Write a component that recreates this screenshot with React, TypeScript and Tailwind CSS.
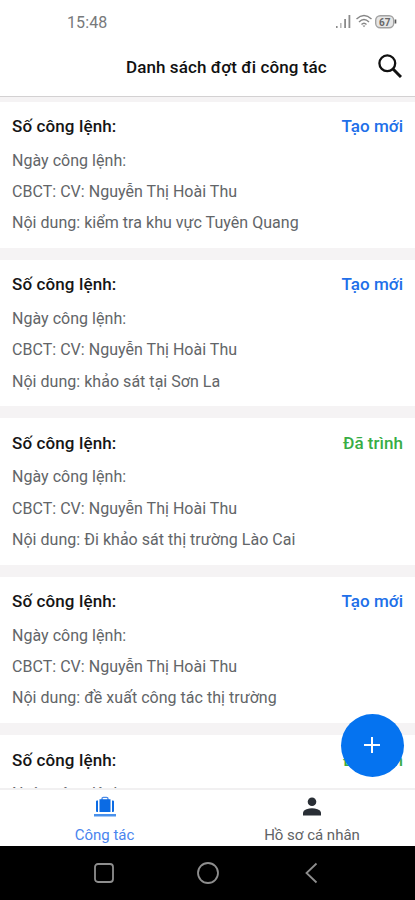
import { clsx } from "clsx"

type Trip = {
	content: string
	status: "new" | "submitted"
}

const trips: Trip[] = [
	{ content: "kiểm tra khu vực Tuyên Quang", status: "new" },
	{ content: "khảo sát tại Sơn La", status: "new" },
	{ content: "Đi khảo sát thị trường Lào Cai", status: "submitted" },
	{ content: "đề xuất công tác thị trường", status: "new" },
	{ content: "khảo sát thị trường", status: "submitted" },
]

const App = () => {
	return (
		<div className="relative flex h-[900px] w-[415px] flex-col overflow-hidden bg-white font-[Roboto,'Noto_Sans',sans-serif] text-[16px]">
			<StatusBar />
			<header className="flex h-[53px] shrink-0 items-center border-b border-[#d3d1d2] pr-3 pl-[126px]">
				<h1 className="mb-1.5 flex-1 whitespace-nowrap text-[17px] leading-6 font-medium tracking-[0.09px] text-[#111]">
					Danh sách đợt đi công tác
				</h1>
				<SearchIcon />
			</header>

			{/* Trip list */}
			<main className="flex min-h-0 flex-1 flex-col gap-3 overflow-hidden bg-[#f5f3f4] pt-[4.6px]">
				{trips.map((trip) => (
					<TripCard key={trip.content} {...trip} />
				))}
			</main>

			{/* Tab bar */}
			<nav className="flex h-[58px] shrink-0 border-t-2 border-[#f1f0f1] bg-white text-[15px] leading-5">
				<div className="flex w-[209px] flex-col items-center pt-[6px] text-[#4a84ee]">
					<LuggageIcon />
					<span className="mt-[7px]">Công tác</span>
				</div>
				<div className="flex w-[206px] flex-col items-center pt-[6px] text-[#606265]">
					<PersonIcon />
					<span className="mt-[7px]">Hồ sơ cá nhân</span>
				</div>
			</nav>
			<SystemBar />

			<button className="absolute top-[713.500px] left-[340.500px] flex h-[63px] w-[63px] items-center justify-center rounded-full bg-[#0573f0]">
				<svg width="16" height="16" viewBox="0 0 16 16" stroke="white" strokeWidth="2">
					<path d="M8 0v16M0 8h16" />
				</svg>
			</button>
		</div>
	)
}

export default App

const TripCard = ({ content, status }: Trip) => {
	return (
		<article className="h-[146.4px] shrink-0 bg-white px-3 pt-[8.4px] leading-[31.3px] tracking-[0.03px] whitespace-nowrap text-[#626568]">
			<div className="mb-[2.7px] flex justify-between text-[17px] leading-8 font-medium">
				<span className="tracking-[0.12px] text-[#151515]">Số công lệnh:</span>
				<span
					className={clsx(
						status === "new" ? "text-[#216fe9]" : "text-[#38ad45]"
					)}>
					{status === "new" ? "Tạo mới" : "Đã trình"}
				</span>
			</div>
			<p>Ngày công lệnh:</p>
			<p>CBCT: CV: Nguyễn Thị Hoài Thu</p>
			<p>Nội dung: {content}</p>
		</article>
	)
}

const StatusBar = () => {
	return (
		<div className="flex h-11 shrink-0 items-center pr-[18px] pl-[67px] text-[#77797b]">
			<span className="mt-[2px] flex-1 text-[16px] tracking-[0.1px]">15:48</span>
			<svg width="61" height="16" viewBox="0 0 61 16" fill="none">
				<g fill="#8b8b8b">
					<path d="M0 12h1.6v2H0z" />
					<path d="M4 9h1.6v5H4z" opacity=".6" />
					<path d="M8.200 5h1.800v9H8.200z" />
					<path d="M12.500 1h1.800v13h-1.800z" />
				</g>
				<g stroke="#858585" strokeWidth="1.400">
					<path d="M20.500 5Q28-2 35.500 5M23 8q5-5 10 0M25.500 10.500q2.500-2.500 5 0" />
				</g>
				<path d="M26.500 11.500h3L28 13.200z" fill="#858585" />
				<rect x="39.700" y="1.700" width="18" height="12" rx="4.500" fill="#e6e6e6" stroke="#a2a2a2" strokeWidth="1.400" />
				<path d="M59.500 5.500v4" stroke="#555" strokeWidth="1.600" />
				<text x="48.700" y="11.500" textAnchor="middle" fontSize="10" fontWeight="700" fill="#686868">
					67
				</text>
			</svg>
		</div>
	)
}

const SearchIcon = () => {
	return (
		<svg className="mr-[1px] mb-2 h-6 w-6" viewBox="0 0 24 24" fill="none" stroke="#111">
			<circle cx="9.300" cy="9.300" r="7.900" strokeWidth="2.300" />
			<path d="m15 15 8 8" strokeWidth="3" />
		</svg>
	)
}

const LuggageIcon = () => {
	return (
		<svg width="22" height="22" viewBox="0 0 22 22" fill="#0b6be4">
			<path d="M8 4V2.800Q8 1.300 9.500 1.300h3q1.500 0 1.500 1.500V4" fill="none" stroke="#4a8ae8" strokeWidth="1.300" />
			<path d="M5.500 3.200h11V16h-11zM4 4.500V16H3q-1 0-1-1V5.500q0-1 1-1zM18 4.500V16h1q1 0 1-1V5.500q0-1-1-1z" />
			<path d="M0 18h22v2.500H0z" opacity=".75" />
		</svg>
	)
}

const PersonIcon = () => {
	return (
		<svg width="22" height="22" viewBox="0 0 22 22" fill="#292e35">
			<circle cx="11" cy="5.700" r="4.300" />
			<path d="M2 19.500v-2.500q0-2.500 3.500-3.800 5.500-2 11 0Q20 14.500 20 17v2.500z" />
		</svg>
	)
}

const SystemBar = () => {
	return (
		<div className="flex h-[54px] shrink-0 items-center justify-center gap-[82px] bg-black">
			<svg width="22" height="22" viewBox="0 0 22 22" fill="none" stroke="#8e8e8e" strokeWidth="1.800">
				<rect x="2" y="2" width="18" height="18" rx="3" />
			</svg>
			<svg width="22" height="22" viewBox="0 0 22 22" fill="none" stroke="#8e8e8e" strokeWidth="1.800">
				<circle cx="11" cy="11" r="10" />
			</svg>
			<svg width="22" height="22" viewBox="0 0 22 22" fill="none" stroke="#8e8e8e" strokeWidth="1.800">
				<path d="M15.500 1.500 5.500 11l10 9.500" />
			</svg>
		</div>
	)
}
